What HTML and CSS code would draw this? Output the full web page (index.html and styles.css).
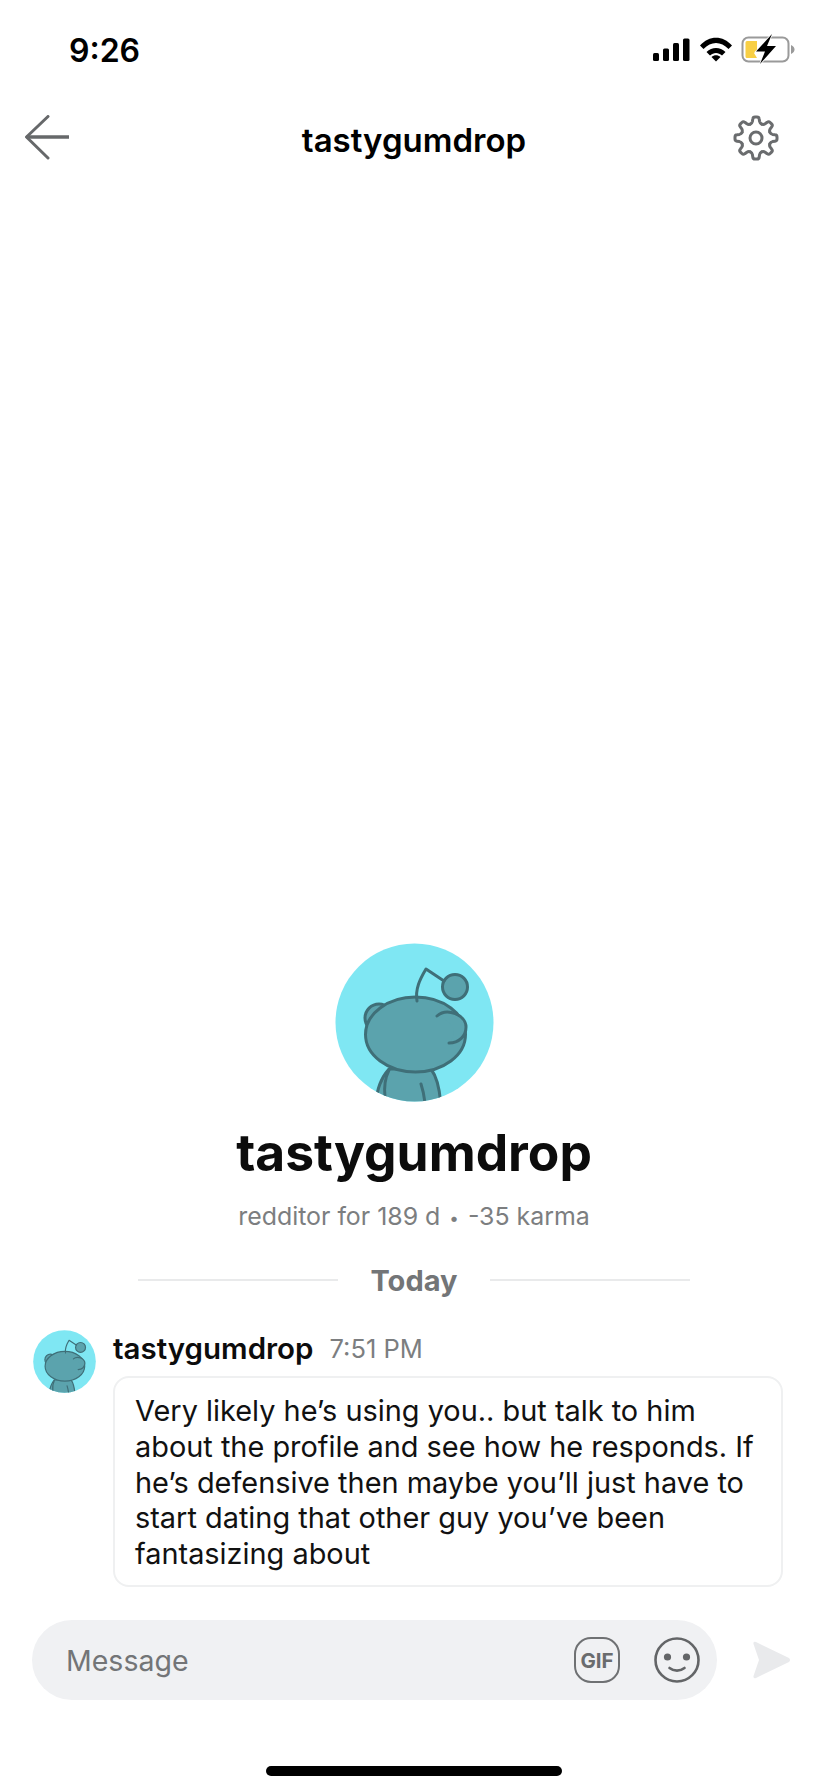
FILE: index.html
```html
<!DOCTYPE html>
<html lang="en">
<head>
    <meta charset="UTF-8" />
    <meta name="viewport" content="width=device-width, initial-scale=1" />
    <title>tastygumdrop</title>
    <link rel="stylesheet" href="styles.css">
</head>
<body>
    <svg class="defs" width="0" height="0">
        <defs>
            <clipPath id="avatarClip"><circle cx="79.5" cy="79.5" r="79"/></clipPath>
            <symbol id="snoo" viewBox="0 0 159 159">
                <circle cx="79.5" cy="79.5" r="79" fill="#7fe7f3"/>
                <g clip-path="url(#avatarClip)" fill="#5ba3ad" stroke="#3f6f78" stroke-width="3" stroke-linecap="round" stroke-linejoin="round">
                    <path d="M40 165 C42 145 46 135 54 126 L96 126 C102 134 105 145 106 165 Z"/>
                    <path d="M54 127 C50 135 49 145 50 154" fill="none"/>
                    <path d="M86 141 C88 147 89 152 90 160" fill="none"/>
                    <circle cx="44" cy="75" r="14"/>
                    <ellipse cx="80.5" cy="91.5" rx="50" ry="37.5"/>
                    <path d="M102 73 C112 64 131 72 131 84 C131 93 124 100 114 100 C122 92 122 80 102 73 Z" stroke="none"/>
                    <path d="M102 73 C112 64 131 72 131 84 C131 93 124 100 114 100" fill="none"/>
                    <circle cx="120" cy="44" r="12.5"/>
                    <path d="M82 58 C80 46 85 36 91 26 L109 38" fill="none"/>
                </g>
            </symbol>
            <path id="gearTooth" d="M-5.74 -13.86 Q-4 -14.6 -3.6 -16.5 L-3.2 -19 Q-3 -21 -1 -21 H1 Q3 -21 3.2 -19 L3.6 -16.5 Q4 -14.6 5.74 -13.86"/>
        </defs>
    </svg>

    <div class="phone">
        <div class="status-bar">
            <span class="clock">9:26</span>
            <svg class="status-icons" width="142" height="30" viewBox="653 34 142 30">
                <rect x="653" y="53" width="6" height="8" rx="1.5"/>
                <rect x="663" y="48.5" width="6" height="12.5" rx="1.5"/>
                <rect x="673" y="43" width="6" height="18" rx="1.5"/>
                <rect x="683" y="38.5" width="6.5" height="22.5" rx="1.5"/>
                <path d="M700 45.5 C709 35 723 35 732 45.5 L728.5 49 C721 41 711 41 703.5 49 Z"/>
                <path d="M706.5 52 C712 46.5 720 46.5 725.5 52 L722 55.5 C718.5 52 713.5 52 710 55.5 Z"/>
                <path d="M711.5 57 C714 54.5 718 54.5 720.5 57 L716 61.5 Z"/>
                <rect x="742.5" y="37.5" width="46" height="24" rx="6" fill="none" stroke="#9a9a9a" stroke-width="2"/>
                <path d="M791 45 C793.5 46 794.5 48 794.5 49.5 C794.5 51 793.5 53 791 54 Z" fill="#9a9a9a"/>
                <path d="M747 41 H757 V50 L754 53 L757 58 H747 A1.5 1.5 0 0 1 745.5 56.5 V42.5 A1.5 1.5 0 0 1 747 41 Z" fill="#f8cf45"/>
                <path d="M772 34 L756 51.5 H765 L760 64 L776 46 H767 Z" stroke="#fff" stroke-width="1.5" paint-order="stroke"/>
            </svg>
        </div>

        <div class="nav">
            <svg class="nav-back" width="46" height="46" viewBox="0 0 46 46" fill="none" stroke="#66686a" stroke-width="3" stroke-linecap="round" stroke-linejoin="round">
                <path d="M24 1.5 L2.5 22 L24 43"/>
                <path d="M2.5 22 H45" stroke-linecap="butt" stroke-width="3.4"/>
            </svg>
            <h1 class="nav-title">tastygumdrop</h1>
            <svg class="nav-gear" width="48" height="48" viewBox="-24 -24 48 48" fill="none" stroke="#6a6c6e" stroke-width="3" stroke-linecap="round" stroke-linejoin="round">
                <circle r="6"/>
                <use href="#gearTooth"/>
                <use href="#gearTooth" transform="rotate(45)"/>
                <use href="#gearTooth" transform="rotate(90)"/>
                <use href="#gearTooth" transform="rotate(135)"/>
                <use href="#gearTooth" transform="rotate(180)"/>
                <use href="#gearTooth" transform="rotate(225)"/>
                <use href="#gearTooth" transform="rotate(270)"/>
                <use href="#gearTooth" transform="rotate(315)"/>
            </svg>
        </div>

        <div class="thread">
            <div class="profile">
                <svg class="profile-avatar" width="159" height="159"><use href="#snoo"/></svg>
                <div class="profile-name">tastygumdrop</div>
                <div class="profile-meta">redditor for 189 d <span class="meta-dot">•</span> -35 karma</div>
            </div>

            <div class="day-divider">
                <span class="day-line"></span>
                <span class="day-label">Today</span>
                <span class="day-line"></span>
            </div>

            <div class="message">
                <svg class="message-avatar" width="63" height="63"><use href="#snoo"/></svg>
                <div class="message-body">
                    <div class="message-head">
                        <span class="message-author">tastygumdrop</span>
                        <span class="message-time">7:51 PM</span>
                    </div>
                    <div class="bubble">Very likely he’s using you.. but talk to him about the profile and see how he responds. If he’s defensive then maybe you’ll just have to start dating that other guy you’ve been fantasizing about</div>
                </div>
            </div>
        </div>

        <div class="composer">
            <div class="input-bar">
                <span class="placeholder">Message</span>
                <span class="gif-icon">GIF</span>
                <svg width="46" height="46" viewBox="0 0 46 46" fill="none" stroke="#636567" stroke-width="2.6">
                    <circle cx="23" cy="23" r="21.5"/>
                    <circle cx="13.5" cy="20" r="3.6" fill="#636567" stroke="none"/>
                    <circle cx="32.5" cy="20" r="3.6" fill="#636567" stroke="none"/>
                    <path d="M15.5 31 C20 34.5 26 34.5 30.5 31" stroke-linecap="round"/>
                </svg>
            </div>
            <svg class="send" width="38" height="38" viewBox="0 0 38 38">
                <path d="M3 1 L36 17 Q38 19 36 21 L3 37 Q0 38 0.5 35 L6 19 L0.5 3 Q0 0 3 1 Z" fill="#e9eaec"/>
            </svg>
        </div>

        <div class="home-indicator"></div>
    </div>
</body>
</html>
```

FILE: styles.css
```css
* {
    box-sizing: border-box;
}
body {
    margin: 0;
    background-color: #fff;
    font-family: Inter, "Noto Sans", sans-serif;
    color: #0c0c0c;
}
.defs {
    display: block;
    height: 0;
}
.phone {
    width: 828px;
    height: 1792px;
    display: flex;
    flex-direction: column;
    overflow: hidden;
}
.status-bar {
    height: 100px;
    padding: 36px 33px 0 69px;
    display: flex;
    justify-content: space-between;
    align-items: flex-start;
}
.status-icons {
    margin-top: -2px;
}
.clock {
    font-size: 32px;
    font-weight: 600;
    line-height: 30px;
    color: #000;
}
.nav {
    height: 76px;
    padding: 0 24px;
    display: grid;
    grid-template-columns: 1fr auto 1fr;
    align-items: center;
}
.nav-gear {
    justify-self: end;
    margin-right: 24px;
}
.nav-title {
    margin: 0;
    padding-top: 3px;
    font-size: 33px;
    font-weight: 600;
    line-height: 40px;
    color: #000;
}
.thread {
    flex: 1;
    display: flex;
    flex-direction: column;
    justify-content: flex-end;
}
.profile {
    display: flex;
    flex-direction: column;
    align-items: center;
}
.profile-avatar {
    display: block;
}
.profile-name {
    margin-top: 20px;
    font-size: 51.5px;
    font-weight: 700;
    line-height: 60px;
}
.profile-meta {
    margin-top: 19px;
    font-size: 24.9px;
    line-height: 30px;
    color: #7c7e80;
}
.meta-dot {
    margin: 0 2px;
    font-size: 17px;
    line-height: 0;
    vertical-align: 1px;
}
.day-divider {
    margin-top: 29px;
    height: 40px;
    display: flex;
    justify-content: center;
    align-items: center;
    gap: 32px;
}
.day-line {
    width: 200px;
    height: 2px;
    background-color: #e9eaeb;
}
.day-label {
    width: 88px;
    text-align: center;
    font-size: 29px;
    font-weight: 700;
    color: #737577;
}
.message {
    margin-top: 30px;
    padding: 0 45px 0 33px;
    display: flex;
    gap: 17px;
}
.message-avatar {
    flex-shrink: 0;
}
.message-body {
    flex: 1;
}
.message-head {
    height: 36px;
    display: flex;
    align-items: center;
    gap: 16px;
}
.message-author {
    font-size: 29.5px;
    font-weight: 600;
}
.message-time {
    font-size: 25.5px;
    color: #7c7e80;
}
.bubble {
    margin-top: 10px;
    padding: 15px 20px 14px;
    height: 211px;
    border: 2px solid #eff0f1;
    border-radius: 16px;
    font-size: 28.9px;
    line-height: 35.8px;
    color: #111;
}
.composer {
    margin-top: 33px;
    padding: 0 37px 0 32px;
    display: flex;
    justify-content: space-between;
    align-items: center;
}
.input-bar {
    width: 685px;
    height: 80px;
    padding: 0 17px 0 34px;
    display: flex;
    align-items: center;
    gap: 34px;
    background-color: #f0f1f3;
    border-radius: 40px;
}
.placeholder {
    flex: 1;
    font-size: 28.5px;
    color: #737577;
}
.gif-icon {
    width: 46px;
    height: 46px;
    display: flex;
    align-items: center;
    justify-content: center;
    border: 2.5px solid #6f7173;
    border-radius: 17px;
    font-size: 20.5px;
    font-weight: 700;
    color: #6a6c6e;
}
.home-indicator {
    width: 296px;
    height: 10px;
    margin: 66px auto 16px;
    background-color: #000;
    border-radius: 5px;
}
```
